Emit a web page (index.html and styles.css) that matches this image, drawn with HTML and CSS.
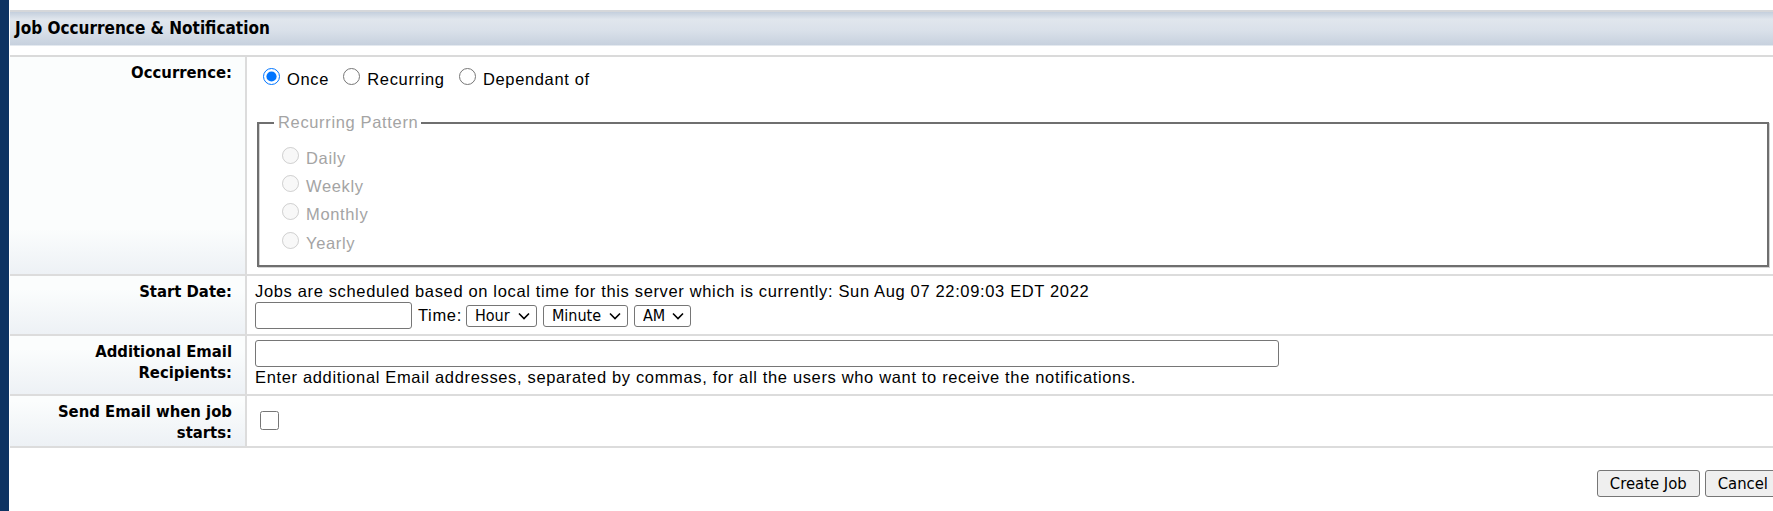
FILE: index.html
```html
<!DOCTYPE html>
<html lang="en">
<head>
<meta charset="utf-8">
<title>Job Occurrence &amp; Notification</title>
<link rel="stylesheet" href="styles.css">
</head>
<body>
<div class="page">
  <div class="strip"></div>
  <div class="main">
    <div class="section-head">Job Occurrence &amp; Notification</div>
    <div class="form">
      <div class="row row-occ">
        <div class="label">Occurrence:</div>
        <div class="value">
          <div class="choices">
            <label class="choice"><input type="radio" name="occ" checked>Once</label>
            <label class="choice"><input type="radio" name="occ">Recurring</label>
            <label class="choice"><input type="radio" name="occ">Dependant of</label>
          </div>
          <fieldset class="pattern">
            <legend>Recurring Pattern</legend>
            <label class="pattern-item"><input type="radio" name="pat" disabled>Daily</label>
            <label class="pattern-item"><input type="radio" name="pat" disabled>Weekly</label>
            <label class="pattern-item"><input type="radio" name="pat" disabled>Monthly</label>
            <label class="pattern-item"><input type="radio" name="pat" disabled>Yearly</label>
          </fieldset>
        </div>
      </div>
      <div class="row row-date">
        <div class="label">Start Date:</div>
        <div class="value">
          <div class="note">Jobs are scheduled based on local time for this server which is currently: Sun Aug 07 22:09:03 EDT 2022</div>
          <div class="date-line">
            <input type="text" class="date-input">
            <span class="time-label">Time:</span>
            <select class="sel sel-hour"><option>Hour</option></select>
            <select class="sel sel-min"><option>Minute</option></select>
            <select class="sel sel-ampm"><option>AM</option></select>
          </div>
        </div>
      </div>
      <div class="row row-email">
        <div class="label">Additional Email Recipients:</div>
        <div class="value">
          <input type="text" class="email-input">
          <div class="note help">Enter additional Email addresses, separated by commas, for all the users who want to receive the notifications.</div>
        </div>
      </div>
      <div class="row row-start">
        <div class="label">Send Email when job starts:</div>
        <div class="value">
          <input type="checkbox" class="check">
        </div>
      </div>
    </div>
    <div class="actions">
      <button class="btn">Create Job</button>
      <button class="btn">Cancel</button>
    </div>
  </div>
</div>
</body>
</html>
```
FILE: styles.css
```css
html, body {
  margin: 0;
  padding: 0;
  background: #ffffff;
  overflow: hidden;
}

.page {
  display: flex;
  width: 1786px;
  height: 511px;
  font-family: "Liberation Sans", Arial, sans-serif;
  font-size: 16.5px;
  letter-spacing: 0.65px;
  color: #000;
}

.strip {
  width: 9px;
  flex: none;
  background: #0e3362;
}

.main {
  margin-left: 1px;
  width: 1776px;
  flex: none;
}

.section-head {
  margin-top: 10px;
  height: 33px;
  border-top: 2px solid #d5d7da;
  border-bottom: 1px solid #e4e9ef;
  background: linear-gradient(to bottom, #c4cfdd 0%, #e0e6ed 22%, #dae1ea 55%, #c7d1de 100%);
  font-family: "DejaVu Sans Condensed", "DejaVu Sans", sans-serif;
  font-weight: bold;
  font-size: 17px;
  letter-spacing: 0;
  line-height: 33px;
  padding-left: 5px;
  color: #000;
}

.form {
  margin-top: 9px;
  border-top: 2px solid #dadada;
}

.row {
  display: grid;
  grid-template-columns: 237px 1fr;
  border-bottom: 2px solid #dcdcdc;
}

.row-occ { height: 217px; }
.row-date { height: 58px; }
.row-email { height: 58px; }
.row-start { height: 50px; }

.label {
  box-sizing: border-box;
  border-right: 2px solid #dcdcdc;
  padding: 5px 13px 0 20px;
  text-align: right;
  font-family: "DejaVu Sans Condensed", "DejaVu Sans", sans-serif;
  font-weight: bold;
  font-size: 16.5px;
  letter-spacing: 0;
  line-height: 21px;
  background: #fbfdfd linear-gradient(to bottom, #fbfdfd, #edf1f5) no-repeat left bottom / 100% 45px;
}

.value {
  padding-left: 8px;
  min-width: 0;
}

/* Occurrence */
.choices {
  padding-top: 11px;
  margin-left: 8px;
}

.choice {
  margin-right: 9px;
}

input[type="radio"] {
  width: 17px;
  height: 17px;
  margin: 0 7px 0 0;
  vertical-align: baseline;
}

.pattern {
  margin: 24px 17px 0 2px;
  padding: 11.5px 0 8px 15px;
  border: 2px solid #6f6f6f;
  box-shadow: 1px 1px 0 #d2d2d2, inset 1px 0 0 #d2d2d2;
}

.pattern legend {
  padding: 0 3px 0 4px;
  color: #a4a4a4;
}

.pattern-item {
  display: block;
  line-height: 28.4px;
  padding-left: 8px;
  color: #a4a4a4;
}

/* Start date */
.row-date .value {
  padding-top: 6px;
}

.note {
  line-height: 18px;
}

.date-line {
  display: flex;
  align-items: center;
  margin-top: 2px;
}

input[type="text"] {
  box-sizing: border-box;
  height: 27px;
  border: 1px solid #767676;
  border-radius: 3px;
  margin: 0;
  padding: 0 4px;
  font-family: "Liberation Sans", Arial, sans-serif;
  font-size: 16px;
}

.date-input {
  width: 157px;
}

.time-label {
  margin-left: 6px;
  margin-right: 4px;
}

.sel {
  box-sizing: border-box;
  height: 22px;
  margin: 0 6px 0 0;
  padding: 0 0 0 8px;
  border: 1px solid #767676;
  border-radius: 3px;
  appearance: none;
  -webkit-appearance: none;
  background: #fff url("data:image/svg+xml,%3Csvg xmlns='http://www.w3.org/2000/svg' width='12' height='8' viewBox='0 0 12 8'%3E%3Cpath d='M1 1.5 L6 6.5 L11 1.5' fill='none' stroke='%23000' stroke-width='1.6'/%3E%3C/svg%3E") no-repeat right 6px center / 12px 8px;
  font-family: "DejaVu Sans Condensed", "DejaVu Sans", sans-serif;
  font-size: 16px;
  letter-spacing: 0;
  line-height: 20px;
  color: #000;
}

.sel-hour { width: 71px; }
.sel-min { width: 85px; }
.sel-ampm { width: 57px; }

/* Email */
.row-email .value {
  padding-top: 4px;
}

.email-input {
  display: block;
  width: 1024px;
}

.help {
  margin-top: 1px;
}

/* Checkbox */
.check {
  width: 19px;
  height: 19px;
  margin: 15px 0 0 5px;
}

/* Buttons */
.actions {
  display: flex;
  justify-content: flex-end;
  gap: 5px;
  margin-top: 22px;
  padding-right: 5px;
}

.btn {
  box-sizing: border-box;
  height: 27px;
  padding: 0 12px;
  border: 1px solid #767676;
  border-radius: 3px;
  background: #efefef;
  font-family: "DejaVu Sans Condensed", "DejaVu Sans", sans-serif;
  font-size: 16.5px;
  letter-spacing: 0;
  color: #000;
}
```
